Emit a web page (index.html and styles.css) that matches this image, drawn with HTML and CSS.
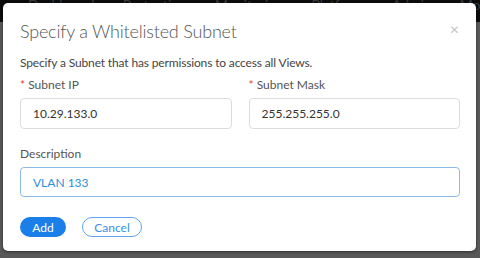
FILE: index.html
```html
<!DOCTYPE html>
<html lang="en">
<head>
  <meta charset="UTF-8" />
  <title>Specify a Whitelisted Subnet</title>
  <link rel="stylesheet" href="styles.css">
</head>
<body>
  <nav class="topnav">
    <span>Dashboard</span>
    <span>Protection</span>
    <span>Monitoring</span>
    <span>Platform</span>
    <span>Admin</span>
    <span>More &#9662;</span>
  </nav>
  <div class="page"></div>

  <div class="modal">
    <div class="modal-header">
      <h2>Specify a Whitelisted Subnet</h2>
      <span class="close">&times;</span>
    </div>
    <p class="intro">Specify a Subnet that has permissions to access all Views.</p>

    <div class="row">
      <div class="field">
        <label><span class="req">*</span> Subnet IP</label>
        <input type="text" value="10.29.133.0">
      </div>
      <div class="field">
        <label><span class="req">*</span> Subnet Mask</label>
        <input type="text" value="255.255.255.0">
      </div>
    </div>

    <div class="field">
      <label>Description</label>
      <input type="text" class="focused" value="VLAN 133">
    </div>

    <div class="actions">
      <button class="btn-add">Add</button>
      <button class="btn-cancel">Cancel</button>
    </div>
  </div>
</body>
</html>
```

FILE: styles.css
```css
* {
  box-sizing: border-box;
}

body {
  margin: 0;
  font-family: 'Lato', sans-serif;
  background: #595959;
  height: 258px;
  overflow: hidden;
}

.topnav {
  background: #0c0c0c;
  height: 22px;
  display: flex;
  gap: 28px;
  padding-left: 28px;
  font-size: 14px;
  color: #3a3a3a;
  line-height: 10px;
  overflow: hidden;
}

.modal {
  position: absolute;
  top: 3px;
  left: 3px;
  width: 473px;
  height: 248px;
  background: #fff;
  border-radius: 5px;
  box-shadow: 0 1px 3px rgba(0, 0, 0, 0.5);
  padding: 0 16px 0 17px;
  display: flex;
  flex-direction: column;
}

.modal-header {
  display: flex;
  justify-content: space-between;
  align-items: center;
  height: 48px;
  padding-top: 8px;
}

.modal-header h2 {
  margin: 0;
  font-size: 18px;
  font-weight: 300;
  letter-spacing: -0.2px;
  color: #555;
}

.close {
  font-size: 16px;
  color: #c4c4c4;
  margin: 0 1px 5px 0;
}

.intro {
  margin: 5px 0 0;
  font-size: 12px;
  letter-spacing: -0.15px;
  color: #444;
  line-height: 14px;
}

.row {
  display: flex;
  gap: 17px;
  margin-top: 8px;
}

.row .field {
  flex: 1;
}

.field {
  display: flex;
  flex-direction: column;
}

label {
  font-size: 12px;
  color: #555;
  line-height: 14px;
  margin-bottom: 6px;
}

.req {
  color: #e4463b;
}

input {
  height: 31px;
  border: 1px solid #dcdcdc;
  border-radius: 4px;
  padding: 0 12px;
  font-family: inherit;
  font-size: 12px;
  color: #333;
}

input.focused {
  border-color: #8dbbea;
  color: #2b8fd8;
  height: 30px;
}

.row + .field {
  margin-top: 18px;
}

.actions {
  display: flex;
  gap: 16px;
  margin-top: 20px;
}

.actions button {
  height: 20px;
  border-radius: 10px;
  font-family: inherit;
  font-size: 12px;
  padding: 0;
}

.btn-add {
  width: 46px;
  background: #1a7fe8;
  border: none;
  color: #fff;
}

.btn-cancel {
  width: 60px;
  background: #fff;
  border: 1px solid #5ea4ee;
  color: #3b8fe3;
}
```
